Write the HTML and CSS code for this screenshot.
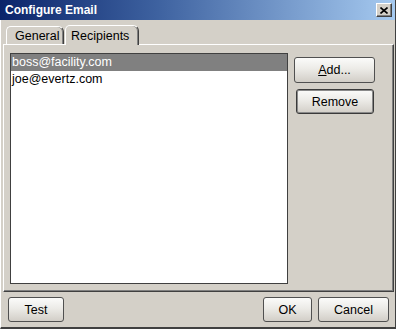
FILE: index.html
```html
<!DOCTYPE html>
<html lang="en">
<head>
    <meta charset="UTF-8">
    <title>Configure Email</title>
    <link rel="stylesheet" href="styles.css">
</head>
<body>
    <div class="window">
        <div class="titlebar">
            <span class="title">Configure Email</span>
            <button class="close" aria-label="Close">
                <svg width="8" height="7" viewBox="0 0 8 7">
                    <path d="M0.5 0.5 L7.5 6.5 M7.5 0.5 L0.5 6.5" stroke="#000" stroke-width="1.6" fill="none"/>
                </svg>
            </button>
        </div>

        <div class="tabs">
            <div class="tab">General</div>
            <div class="tab active">Recipients</div>
        </div>

        <div class="panel">
            <ul class="list">
                <li class="selected">boss@facility.com</li>
                <li>joe@evertz.com</li>
            </ul>
            <div class="side">
                <button class="btn add"><u>A</u>dd...</button>
                <button class="btn remove">Remove</button>
            </div>
        </div>

        <div class="footer">
            <button class="btn test">Test</button>
            <div class="footer-right">
                <button class="btn ok">OK</button>
                <button class="btn cancel">Cancel</button>
            </div>
        </div>
    </div>
</body>
</html>
```

FILE: styles.css
```css
* {
    margin: 0;
    padding: 0;
    box-sizing: border-box;
}

body {
    font-family: "Liberation Sans", Arial, sans-serif;
    font-size: 12.5px;
    color: #000;
    background-color: #d4d0c8;
}

/* Janela */
.window {
    width: 396px;
    height: 329px;
    background-color: #d4d0c8;
    border-left: 1px solid #ffffff;
    border-right: 1px solid #404040;
    border-bottom: 2px solid #404040;
    display: flex;
    flex-direction: column;
}

/* Barra de titulo */
.titlebar {
    height: 20px;
    margin-left: -1px;
    background: linear-gradient(90deg, #0a246a 0%, #3e62a0 40%, #a6caf0 100%);
    display: flex;
    align-items: center;
    justify-content: space-between;
    padding-left: 5px;
    padding-right: 3px;
}

.title {
    color: #fff;
    font-weight: bold;
    font-size: 12px;
}

.close {
    width: 16px;
    height: 14px;
    background-color: #d4d0c8;
    border: 1px solid;
    border-color: #ffffff #404040 #404040 #ffffff;
    box-shadow: inset -1px -1px 0 #808080;
    display: flex;
    align-items: center;
    justify-content: center;
}

/* Abas */
.tabs {
    display: flex;
    align-items: flex-end;
    height: 24px;
    padding-left: 5px;
}

.tab {
    height: 18px;
    padding: 2px 0 0 8px;
    border: 1px solid;
    border-bottom: none;
    border-color: #ffffff #404040 transparent #ffffff;
    border-radius: 5px 6px 0 0;
    box-shadow: inset -1px 0 0 #808080;
}

.tab:first-child {
    width: 58px;
}

.tab.active {
    width: 74px;
    height: 20px;
    padding: 3px 0 0 5px;
    margin-left: 1px;
    position: relative;
    top: 1px;
    background-color: #d4d0c8;
    z-index: 1;
}

/* Painel */
.panel {
    height: 248px;
    margin: 0 1px 0 2px;
    border: 1px solid;
    border-color: #ffffff #404040 #404040 #ffffff;
    box-shadow: inset -1px -1px 0 #808080;
    display: flex;
    padding: 8px 0 0 6px;
}

.list {
    list-style: none;
    width: 278px;
    height: 231px;
    background-color: #fff;
    border: 1px solid #404040;
}

.list li {
    height: 17px;
    line-height: 17px;
    padding-left: 1px;
}

.list li.selected {
    background-color: #808080;
    color: #fff;
}

.side {
    display: flex;
    flex-direction: column;
    padding: 4px 0 0 6px;
    gap: 6px;
}

/* Botoes */
.btn {
    font-family: "Liberation Sans", Arial, sans-serif;
    font-size: 12.5px;
    color: #000;
    height: 25px;
    border: 1px solid #505050;
    border-radius: 3px;
    background: linear-gradient(180deg, #fbfbfa 0%, #ecebe7 45%, #d2cec7 100%);
    cursor: pointer;
}

.btn u {
    text-decoration: underline;
}

.add {
    width: 81px;
    height: 26px;
}

.remove {
    width: 78px;
    margin-left: 2px;
    border-color: #3a3a3a;
    box-shadow: inset 0 0 0 1px #8a8a8a;
}

/* Rodape */
.footer {
    display: flex;
    justify-content: space-between;
    padding: 5px 6px 0 7px;
}

.test {
    width: 56px;
}

.footer-right {
    display: flex;
    gap: 6px;
}

.ok {
    width: 49px;
}

.cancel {
    width: 71px;
}
```
